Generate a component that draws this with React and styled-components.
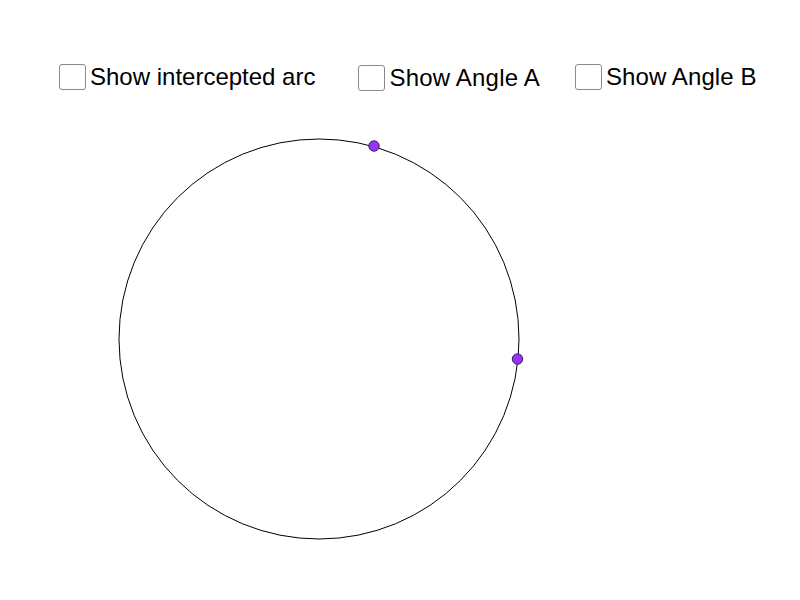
import React from "react";
import styled, { createGlobalStyle } from "styled-components";

const GlobalStyle = createGlobalStyle`
	html, body {
		margin: 0;
		padding: 0;
		background: #ffffff;
		overflow: hidden;
	}
	body {
		font-family: "Liberation Sans", Arial, sans-serif;
	}
`;

const Applet = styled.div`
	width: 800px;
	height: 600px;
	display: flex;
	flex-direction: column;
	background: #ffffff;
`;

const Toolbar = styled.div`
	display: flex;
	align-items: center;
	padding: 64px 0 0 59px;
	height: 26px;
`;

const Option = styled.label`
	display: flex;
	align-items: center;
	gap: 4px;
	margin-left: ${(p) => p.$offset || 0}px;
	margin-top: ${(p) => p.$drop || 0}px;
	cursor: pointer;
`;

const Box = styled.span`
	box-sizing: border-box;
	width: 27px;
	height: 26px;
	border: 1px solid #8a8a8a;
	border-radius: 3px;
	background: #ffffff;
`;

const Caption = styled.span`
	font-size: 24px;
	color: #000000;
	line-height: 26px;
	white-space: nowrap;
	letter-spacing: ${(p) => p.$spacing || 0}px;
`;

const Canvas = styled.svg`
	display: block;
	flex: 1;
	width: 800px;
`;

const options = [
	{ label: "Show intercepted arc", offset: 0 },
	{ label: "Show Angle A", offset: 43, drop: 1, spacing: 0.2 },
	{ label: "Show Angle B", offset: 35, spacing: 0.1 },
];

// circle geometry in canvas coords (canvas starts at y = 90)
const center = { x: 319, y: 249 };
const radius = 200;
const points = [
	{ x: 374, y: 56 },
	{ x: 517.5, y: 269 },
];

export default function App() {
	return (
		<Applet>
			<GlobalStyle />
			<Toolbar>
				{options.map((o) => (
					<Option key={o.label} $offset={o.offset} $drop={o.drop}>
						<Box />
						<Caption $spacing={o.spacing}>{o.label}</Caption>
					</Option>
				))}
			</Toolbar>
			<Canvas viewBox="0 0 800 510" height="510">
				<circle cx={center.x} cy={center.y} r={radius} fill="none" stroke="#000" strokeWidth="1" />
				{points.map((p, i) => (
					<circle key={i} cx={p.x} cy={p.y} r="5.2" fill="#9933ff" stroke="#3a1a55" strokeWidth="1" />
				))}
			</Canvas>
		</Applet>
	);
}
